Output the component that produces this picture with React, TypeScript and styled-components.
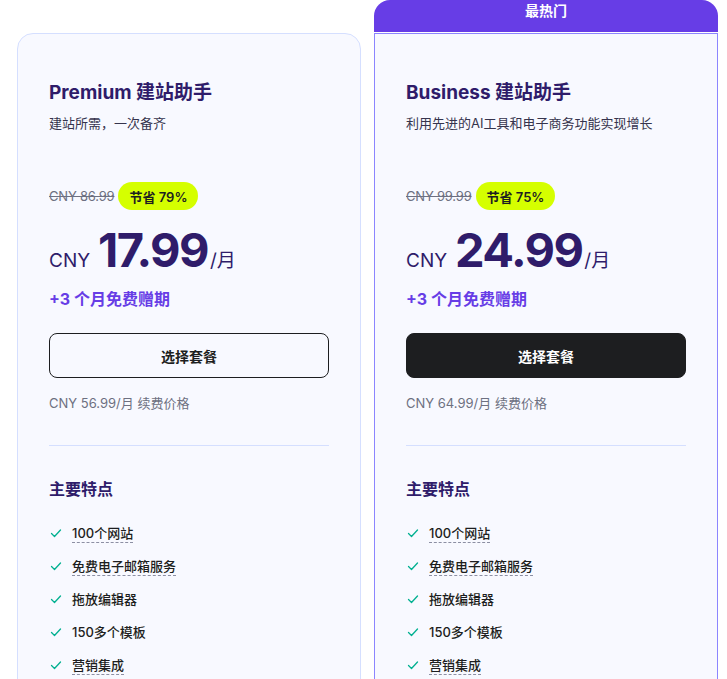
import React from "react";
import styled, { createGlobalStyle } from "styled-components";

const Global = createGlobalStyle`
  html, body { margin: 0; padding: 0; background: #ffffff; overflow: hidden; }
  body { font-family: Inter, "Noto Sans CJK SC", sans-serif; -webkit-font-smoothing: antialiased; }
  * { box-sizing: border-box; }
`;

const Page = styled.div`
  display: flex;
  align-items: flex-start;
  gap: 13px;
  padding-left: 17px;
  width: 727px;
  height: 679px;
  overflow: hidden;
`;

const Column = styled.div<{ $offset?: boolean }>`
  width: 344px;
  flex: none;
  display: flex;
  flex-direction: column;
  margin-top: ${(p) => (p.$offset ? "33px" : "0")};
`;

const Ribbon = styled.div`
  height: 32px;
  margin-bottom: 1px;
  background: #673de6;
  border-radius: 16px 16px 0 0;
  color: #ffffff;
  font-size: 14px;
  font-weight: 700;
  text-align: center;
  line-height: 22px;
`;

const Card = styled.div<{ $featured?: boolean }>`
  background: #f8f9ff;
  border: 1px solid ${(p) => (p.$featured ? "#8c85ff" : "#d5dfff")};
  border-radius: ${(p) => (p.$featured ? "0" : "16px")};
  padding: 47px 31px 80px;
  display: flex;
  flex-direction: column;
`;

const Title = styled.h2`
  margin: 0;
  font-size: 19px;
  line-height: 24px;
  font-weight: 700;
  color: #2f1c6a;
`;

const Subtitle = styled.p`
  margin: 8px 0 0;
  font-size: 13px;
  line-height: 20px;
  color: #36344d;
`;

const OldRow = styled.div`
  margin-top: 49px;
  display: flex;
  align-items: center;
  gap: 4px;
  height: 28px;
`;

const OldPrice = styled.span`
  font-size: 13px;
  color: #6d7081;
  text-decoration: line-through;
  letter-spacing: -0.2px;
`;

const Badge = styled.span`
  background: #d5ff00;
  border-radius: 14px;
  height: 28px;
  padding: 0 11px;
  display: inline-flex;
  align-items: center;
  font-size: 13px;
  font-weight: 600;
  color: #1d1e20;
`;

const PriceRow = styled.div`
  margin-top: 12px;
  display: flex;
  align-items: baseline;
  color: #2f1c6a;
  height: 56px;
`;

const Currency = styled.span`
  font-size: 19px;
  margin-right: 8px;
`;

const Amount = styled.span`
  font-size: 47px;
  font-weight: 700;
  line-height: 56px;
  letter-spacing: -1.6px;
`;

const Per = styled.span`
  font-size: 19px;
  margin-left: 2px;
`;

const Promo = styled.div`
  margin-top: 10px;
  font-size: 16px;
  line-height: 22px;
  font-weight: 700;
  color: #673de6;
`;

const SelectButton = styled.button<{ $dark?: boolean }>`
  margin-top: 23px;
  height: 45px;
  width: 100%;
  border-radius: 8px;
  border: 1px solid #1d1e20;
  background: ${(p) => (p.$dark ? "#1d1e20" : "transparent")};
  color: ${(p) => (p.$dark ? "#ffffff" : "#1d1e20")};
  font-family: inherit;
  font-size: 14px;
  font-weight: 700;
  cursor: pointer;
`;

const Renewal = styled.div`
  margin-top: 15px;
  font-size: 13px;
  line-height: 20px;
  color: #6d7081;
`;

const Divider = styled.hr`
  margin: 32px 0 0;
  border: none;
  border-top: 1px solid #d5dfff;
`;

const FeaturesHeading = styled.h3`
  margin: 32px 0 0;
  font-size: 16px;
  line-height: 22px;
  font-weight: 700;
  color: #2f1c6a;
`;

const FeatureList = styled.ul`
  list-style: none;
  margin: 23px 0 0;
  padding: 0;
  display: flex;
  flex-direction: column;
  gap: 13px;
`;

const FeatureItem = styled.li`
  display: flex;
  align-items: center;
  gap: 10px;
  height: 20px;
  padding-left: 1px;
`;

const FeatureText = styled.span<{ $dashed?: boolean }>`
  font-size: 13px;
  font-weight: 500;
  color: #1d1e20;
  line-height: 18px;
  border-bottom: ${(p) => (p.$dashed ? "1px dashed #8c8fa3" : "1px solid transparent")};
`;

const Check = () => (
  <svg width="12" height="12" viewBox="0 0 24 24" fill="none" stroke="#00b090" strokeWidth="2.6" strokeLinecap="round" strokeLinejoin="round">
    <path d="M3 13l6 6L21 6" />
  </svg>
);

type Plan = {
  name: string;
  desc: string;
  old: string;
  save: string;
  price: string;
  renew: string;
  featured?: boolean;
};

const features: { t: string; dashed: boolean }[] = [
  { t: "100个网站", dashed: true },
  { t: "免费电子邮箱服务", dashed: true },
  { t: "拖放编辑器", dashed: false },
  { t: "150多个模板", dashed: false },
  { t: "营销集成", dashed: true },
];

const plans: Plan[] = [
  { name: "Premium 建站助手", desc: "建站所需，一次备齐", old: "CNY 86.99", save: "节省 79%", price: "17.99", renew: "CNY 56.99/月 续费价格" },
  { name: "Business 建站助手", desc: "利用先进的AI工具和电子商务功能实现增长", old: "CNY 99.99", save: "节省 75%", price: "24.99", renew: "CNY 64.99/月 续费价格", featured: true },
];

const PlanCard = ({ plan }: { plan: Plan }) => (
  <Card $featured={plan.featured}>
    <Title>{plan.name}</Title>
    <Subtitle>{plan.desc}</Subtitle>
    <OldRow>
      <OldPrice>{plan.old}</OldPrice>
      <Badge>{plan.save}</Badge>
    </OldRow>
    <PriceRow>
      <Currency>CNY</Currency>
      <Amount>{plan.price}</Amount>
      <Per>/月</Per>
    </PriceRow>
    <Promo>+3 个月免费赠期</Promo>
    <SelectButton $dark={plan.featured}>选择套餐</SelectButton>
    <Renewal>{plan.renew}</Renewal>
    <Divider />
    <FeaturesHeading>主要特点</FeaturesHeading>
    <FeatureList>
      {features.map((f) => (
        <FeatureItem key={f.t}>
          <Check />
          <FeatureText $dashed={f.dashed}>{f.t}</FeatureText>
        </FeatureItem>
      ))}
    </FeatureList>
  </Card>
);

export default function App() {
  return (
    <>
      <Global />
      <Page>
        <Column $offset>
          <PlanCard plan={plans[0]} />
        </Column>
        <Column>
          <Ribbon>最热门</Ribbon>
          <PlanCard plan={plans[1]} />
        </Column>
      </Page>
    </>
  );
}
